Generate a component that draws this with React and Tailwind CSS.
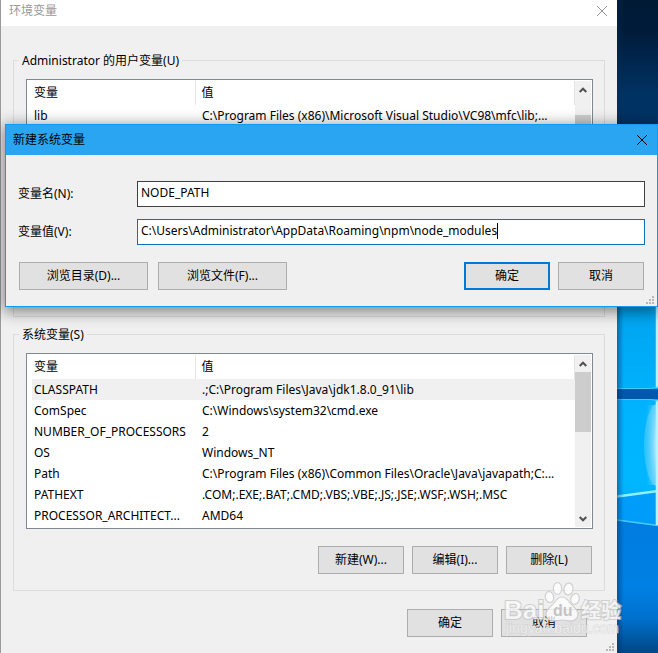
import React, { useState } from "react";

const userVariables = [
  { name: "lib", value: "C:\\Program Files (x86)\\Microsoft Visual Studio\\VC98\\mfc\\lib;..." },
];

const systemVariables = [
  { name: "CLASSPATH", value: ".;C:\\Program Files\\Java\\jdk1.8.0_91\\lib" },
  { name: "ComSpec", value: "C:\\Windows\\system32\\cmd.exe" },
  { name: "NUMBER_OF_PROCESSORS", value: "2" },
  { name: "OS", value: "Windows_NT" },
  { name: "Path", value: "C:\\Program Files (x86)\\Common Files\\Oracle\\Java\\javapath;C:..." },
  { name: "PATHEXT", value: ".COM;.EXE;.BAT;.CMD;.VBS;.VBE;.JS;.JSE;.WSF;.WSH;.MSC" },
  { name: "PROCESSOR_ARCHITECT...", value: "AMD64" },
];

const CloseIcon = () => (
  <svg width="12" height="12" viewBox="0 0 12 12" fill="none" stroke="currentColor" strokeWidth="1">
    <path d="M1 1l10 10M11 1L1 11" />
  </svg>
);

const Chevron = ({ down }) => (
  <svg width="8" height="8" viewBox="0 0 8 8" fill="none" stroke="#505050" strokeWidth="2">
    <path d={down ? "M0.7 2l3.3 3.3L7.3 2" : "M0.7 6L4 2.700L7.3 6"} />
  </svg>
);

const Grip = () => (
  <svg width="8" height="8" viewBox="0 0 8 8" fill="#b8b8b8" className="absolute right-[3px] bottom-0.5">
    <path d="M6 0h2v2h-2zM3 3h2v2h-2zM6 3h2v2h-2zM0 6h2v2h-2zM3 6h2v2h-2zM6 6h2v2h-2z" />
  </svg>
);

const Button = ({ children, wide, primary, onClick }) => (
  <button
    type="button"
    onClick={onClick}
    className={`h-7 bg-[#e1e1e1] text-center ${wide ? "w-[129px]" : "w-[86px]"} ${
      primary ? "border-2 border-[#0078d7]" : "border border-[#adadad]"
    }`}
  >
    {children}
  </button>
);

const Scrollbar = ({ scrolled }) => (
  <div className="flex w-4 flex-col items-center bg-[#f0f0f0]">
    <button type="button" aria-label="向上滚动" className="flex h-[17px] w-full items-center justify-center">
      <Chevron />
    </button>
    <div className={`h-15 w-full bg-[#cdcdcd] ${scrolled ? "mt-[17px]" : ""}`} />
    <button type="button" aria-label="向下滚动" className="mt-auto flex h-[17px] w-full items-center justify-center">
      <Chevron down />
    </button>
  </div>
);

const VariableList = ({ rows, selected, onSelect, scrolled }) => (
  <div className="flex h-44 border border-[#828790] bg-white p-px">
    <div className="min-w-0 flex-1 overflow-hidden pl-1">
      <table className="w-full table-fixed border-collapse text-left">
        <thead>
          <tr className="h-6">
            <th className="w-[163px] border-r border-[#e5e5e5] pl-0.5 font-normal">变量</th>
            <th className="border-r border-[#e5e5e5] pl-1.5 font-normal">值</th>
          </tr>
        </thead>
        <tbody>
          {rows.map((row) => (
            <tr
              key={row.name}
              onClick={() => onSelect && onSelect(row.name)}
              className={`h-[21px] whitespace-nowrap ${selected === row.name ? "bg-[#f0f0f0]" : ""}`}
            >
              <td className="pl-0.5">{row.name}</td>
              <td className="pl-[7px]">{row.value}</td>
            </tr>
          ))}
        </tbody>
      </table>
    </div>
    <Scrollbar scrolled={scrolled} />
  </div>
);

const Wallpaper = () => (
  <svg
    className="absolute top-0 right-0 h-full w-[41px]"
    viewBox="0 0 41 653"
    preserveAspectRatio="none"
    aria-hidden="true"
  >
    <defs>
      <linearGradient id="night" x1="0" y1="0" x2="0" y2="1">
        <stop offset="0" stopColor="#001a35" />
        <stop offset="0.1" stopColor="#001b3a" />
        <stop offset="0.3" stopColor="#003262" />
        <stop offset="1" stopColor="#003c74" />
      </linearGradient>
      <linearGradient id="pane" x1="0" y1="0" x2="0" y2="1">
        <stop offset="0" stopColor="#00a3ee" />
        <stop offset="0.5" stopColor="#00b4ff" />
        <stop offset="0.8" stopColor="#00b6ff" />
        <stop offset="1" stopColor="#009cff" />
      </linearGradient>
      <linearGradient id="floor" x1="0" y1="0" x2="0" y2="1">
        <stop offset="0" stopColor="#007ce0" />
        <stop offset="0.5" stopColor="#0080e4" />
        <stop offset="0.75" stopColor="#0070cc" />
        <stop offset="1" stopColor="#004684" />
      </linearGradient>
      <linearGradient id="edge" x1="0" y1="0" x2="1" y2="0">
        <stop offset="0" stopColor="#002a50" stopOpacity="0.45" />
        <stop offset="1" stopColor="#002a50" stopOpacity="0" />
      </linearGradient>
      <radialGradient id="glow" cx="1" cy="0.5" r="1">
        <stop offset="0" stopColor="#fff" stopOpacity="0.8" />
        <stop offset="1" stopColor="#7fdcff" stopOpacity="0" />
      </radialGradient>
    </defs>
    <rect width="41" height="306" fill="url(#night)" />
    <rect y="300" width="41" height="230" fill="url(#pane)" />
    <path d="M0 496l38-4v33l-38-5z" fill="#009cfa" />
    <path d="M0 520l41 6v127H0z" fill="url(#floor)" />
    <ellipse cx="41" cy="445" rx="14" ry="42" fill="#bdeeff" fillOpacity="0.25" />
    <rect x="28" y="405" width="13" height="80" fill="url(#glow)" />
    <path d="M0 496.500L41 491" stroke="#8df0ff" strokeWidth="2.500" />
    <path d="M0 520l41 5.500" stroke="#46ccf8" strokeWidth="1.500" />
    <path d="M40 306v82M40 400v125" stroke="#b5f3ff" strokeWidth="2.500" />
    <rect y="389" width="41" height="10" fill="#0058ae" />
    <path d="M0 388.500h34l7-1.500M0 399.500h34l7 1.500" stroke="#3dcaff" strokeWidth="1.200" fill="none" />
    <rect width="7" height="653" fill="url(#edge)" />
  </svg>
);

const Watermark = () => (
  <svg
    className="pointer-events-none absolute top-[578px] left-[500px]"
    width="130"
    height="65"
    viewBox="0 0 130 65"
    aria-hidden="true"
  >
    <g fill="#fff" fillOpacity="0.75" stroke="#c4c4c4" strokeOpacity="0.75" strokeWidth="1.200">
      <ellipse cx="49.500" cy="19" rx="4.200" ry="5.500" transform="rotate(-12 49.500 19)" />
      <ellipse cx="57.500" cy="10.500" rx="4.200" ry="6" />
      <ellipse cx="68.500" cy="11" rx="4.500" ry="6" transform="rotate(10 68.500 11)" />
      <ellipse cx="75" cy="21" rx="4.200" ry="5.500" transform="rotate(18 75 21)" />
      <path d="M62 19c-4 0-6 3-8 6-3 4-8 6-8 11 0 4 3 7 7 7 3 0 5-1 9-1s6 1 9 1c4 0 7-3 7-7 0-5-5-7-8-11-2-3-4-6-8-6z" />
    </g>
    <g fontFamily="Liberation Sans, Noto Sans CJK SC, sans-serif">
      <g fill="#fff" fillOpacity="0.75" stroke="#c0c0c0" strokeWidth="2" strokeOpacity="0.7" paintOrder="stroke" fontWeight="700">
        <text x="4" y="41" fontSize="26">Bai</text>
        <text x="81" y="40" fontSize="20" fontFamily="Noto Sans CJK SC, sans-serif">经验</text>
      </g>
      <text x="53" y="38" fontSize="16" fontWeight="700" fill="#c4c4c4">du</text>
      <text x="6" y="55" fontSize="14" fill="#fff" fillOpacity="0.6" stroke="#c0c0c0" strokeWidth="1" strokeOpacity="0.5" paintOrder="stroke">
        jingyan.baidu.com
      </text>
    </g>
  </svg>
);

const NewVariableDialog = () => {
  const [name, setName] = useState("NODE_PATH");
  const [value, setValue] = useState("C:\\Users\\Administrator\\AppData\\Roaming\\npm\\node_modules");

  return (
    <div
      role="dialog"
      aria-label="新建系统变量"
      className="absolute top-[124px] right-0 left-[5px] border border-[#109bf0] bg-[#f0f0f0] shadow-[0_3px_14px_2px_rgba(0,0,0,0.45)]"
    >
      <div className="flex h-[30px] items-center justify-between bg-[#2aa5f2] pr-[9px] pl-[7px]">
        <h2>新建系统变量</h2>
        <button type="button" aria-label="关闭">
          <CloseIcon />
        </button>
      </div>
      <form className="px-3 pt-[26px] pb-4" onSubmit={(e) => e.preventDefault()}>
        <div className="flex items-center">
          <label htmlFor="var-name" className="w-[119px]">变量名(N):</label>
          <div className="flex h-[26px] min-w-0 flex-1 border border-[#404040] bg-white px-[3px] pb-0.5">
            <input
              id="var-name"
              value={name}
              onChange={(e) => setName(e.target.value)}
              className="w-full outline-none"
            />
          </div>
        </div>
        <div className="mt-3 flex items-center">
          <label htmlFor="var-value" className="w-[119px]">变量值(V):</label>
          <div className="flex h-[26px] min-w-0 flex-1 items-center border border-[#0f6fc0] bg-white px-[3px] pb-0.5">
            <input
              id="var-value"
              value={value}
              onChange={(e) => setValue(e.target.value)}
              className="[field-sizing:content] caret-transparent outline-none"
            />
            <span className="h-4 w-px bg-black" />
          </div>
        </div>
        <div className="mt-[17px] flex justify-between px-px">
          <div className="flex gap-2.5">
            <Button wide>浏览目录(D)...</Button>
            <Button wide>浏览文件(F)...</Button>
          </div>
          <div className="flex gap-2">
            <Button primary>确定</Button>
            <Button>取消</Button>
          </div>
        </div>
      </form>
      <Grip />
    </div>
  );
};

const App = () => {
  const [selected, setSelected] = useState("CLASSPATH");

  return (
    <div className="relative min-h-screen overflow-hidden bg-[#9a9a9a] font-['Noto_Sans','Noto_Sans_CJK_SC',sans-serif] text-xs leading-4 text-black">
      <Wallpaper />

      {/* Environment variables window */}
      <div className="relative mr-[41px] ml-px min-h-screen bg-[#f0f0f0]">
        <div className="flex h-[26px] items-center justify-between bg-white pr-[9px] pb-1 pl-2 text-[#999999]">
          <h1>环境变量</h1>
          <button type="button" aria-label="关闭">
            <CloseIcon />
          </button>
        </div>

        <div className="px-3 pt-[25px]">
          <fieldset className="border border-[#dcdcdc] pr-[11px] pb-[61px] pl-3">
            <legend className="-ml-[7px] px-[3px] pt-0.5">Administrator 的用户变量(U)</legend>
            <div className="mt-2.5">
              <VariableList rows={userVariables} scrolled />
            </div>
          </fieldset>

          <fieldset className="mt-2 border border-[#dcdcdc] pr-[11px] pb-4 pl-3">
            <legend className="-ml-[7px] px-[3px] pt-0.5">系统变量(S)</legend>
            <div className="mt-2.5">
              <VariableList rows={systemVariables} selected={selected} onSelect={setSelected} />
            </div>
            <div className="mt-[17px] flex justify-end gap-2 pr-px">
              <Button>新建(W)...</Button>
              <Button>编辑(I)...</Button>
              <Button>删除(L)</Button>
            </div>
          </fieldset>

          <div className="mt-[18px] flex justify-end gap-2 pr-[18px]">
            <Button>确定</Button>
            <Button>取消</Button>
          </div>
        </div>
        <Grip />
      </div>

      <NewVariableDialog />
      <Watermark />
    </div>
  );
};

export default App;
